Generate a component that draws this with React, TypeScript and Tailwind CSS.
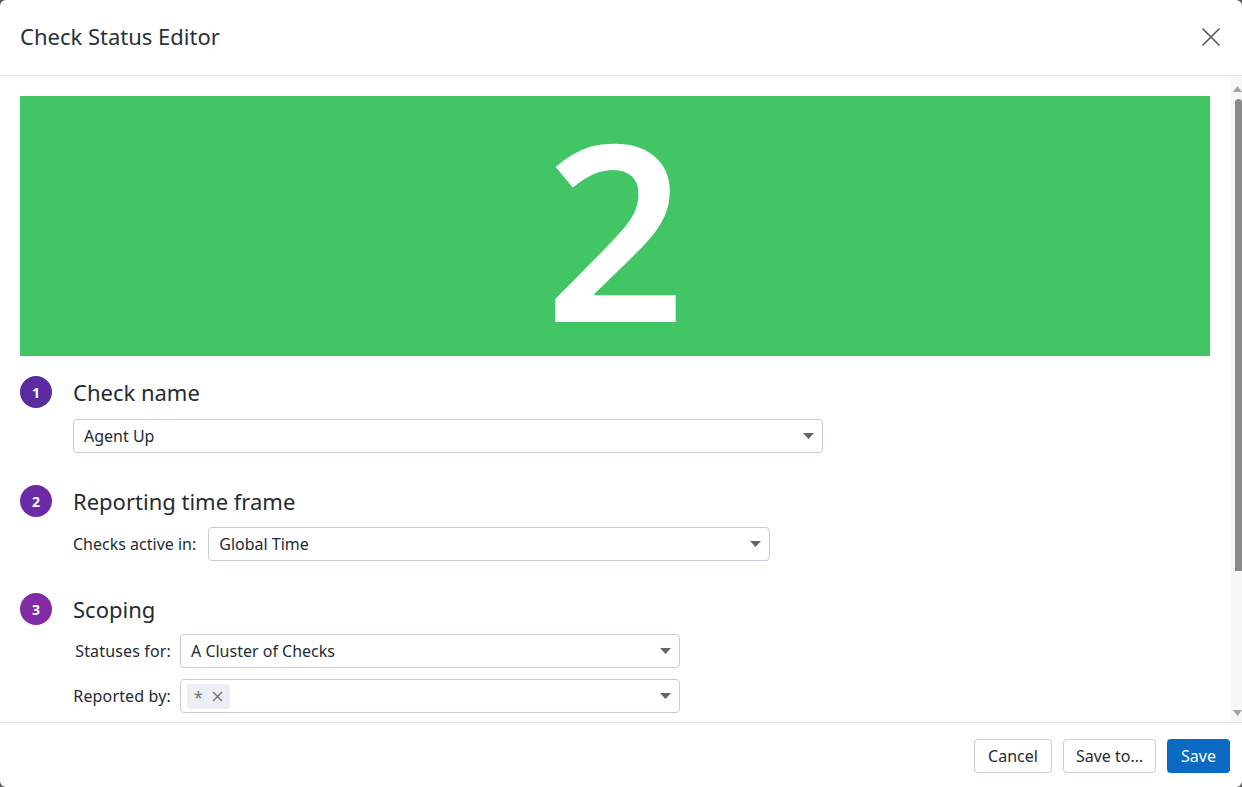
import React from "react";

const font = { fontFamily: '"Noto Sans", "Open Sans", sans-serif' };

function Caret() {
  return (
    <svg width="11" height="6" viewBox="0 0 11 6" className="shrink-0">
      <path d="M0 0 H11 L5.5 6 Z" fill="#5f6670" />
    </svg>
  );
}

function Select({ children, width }: { children: React.ReactNode; width: string }) {
  return (
    <div
      className={`${width} h-[34px] flex items-center justify-between border border-[#c7ccd9] rounded-[4px] bg-white pl-[10px] pr-[8px] text-[16px] text-[#262b33]`}
    >
      <div className="flex items-center">{children}</div>
      <Caret />
    </div>
  );
}

function Step({ n, color, title }: { n: number; color: string; title: string }) {
  return (
    <div className="flex items-center h-[32px]">
      <div
        className={`w-[32px] h-[32px] rounded-full ${color} flex items-center justify-center text-white text-[14px] font-bold`}
      >
        {n}
      </div>
      <div className="ml-[21px] text-[22px] text-[#262b33] leading-none">{title}</div>
    </div>
  );
}

export default function App() {
  return (
    <div className="w-[1242px] h-[787px] bg-[#5a5a5a]" style={font}>
      <div className="w-full h-full bg-white rounded-[6px] flex flex-col overflow-hidden">
        {/* Header */}
        <div className="h-[76px] shrink-0 border-b border-[#e1e1ea] flex items-center justify-between pl-[20px] pr-[20px] pb-[2px]">
          <div className="text-[22px] text-[#28313b]">Check Status Editor</div>
          <svg width="20" height="20" viewBox="0 0 20 20" className="mr-[1px]">
            <path d="M2 2 L18 18 M18 2 L2 18" stroke="#4c5561" strokeWidth="1.6" strokeLinecap="round" />
          </svg>
        </div>

        {/* Body */}
        <div className="flex-1 flex overflow-hidden min-h-0">
          <div className="flex-1 overflow-hidden pl-[20px] pr-[21px] pt-[20px]">
            <div className="h-[260px] bg-[#42c565] flex items-center justify-center">
              <span className="text-white text-[246px] leading-[240px] font-semibold pt-[2px]">2</span>
            </div>

            {/* Section 1 */}
            <div className="mt-[20px]">
              <Step n={1} color="bg-[#5b2ca0]" title="Check name" />
              <div className="mt-[11px] ml-[53px]">
                <Select width="w-[750px]">Agent Up</Select>
              </div>
            </div>

            {/* Section 2 */}
            <div className="mt-[32px]">
              <Step n={2} color="bg-[#6d2aa6]" title="Reporting time frame" />
              <div className="mt-[10px] ml-[53px] flex items-center">
                <div className="text-[16px] text-[#262b33] mr-[12px]">Checks active in:</div>
                <Select width="w-[562px]">Global Time</Select>
              </div>
            </div>

            {/* Section 3 */}
            <div className="mt-[32px]">
              <Step n={3} color="bg-[#8229a6]" title="Scoping" />
              <div className="mt-[9px] ml-[53px] flex flex-col gap-[11px]">
                <div className="flex items-center">
                  <div className="w-[98px] text-right text-[16px] text-[#262b33] mr-[9px] tracking-[0.15px]">Statuses for:</div>
                  <Select width="w-[500px]">A Cluster of Checks</Select>
                </div>
                <div className="flex items-center">
                  <div className="w-[98px] text-right text-[16px] text-[#262b33] mr-[9px] tracking-[0.15px]">Reported by:</div>
                  <div className="w-[500px] h-[34px] flex items-center justify-between border border-[#c7ccd9] rounded-[4px] bg-white pl-[6px] pr-[8px]">
                    <div className="h-[25px] px-[7px] rounded-[4px] bg-[#eceef3] flex items-center gap-[9px] text-[16px] text-[#6a707a]">
                      <span className="mt-[2px]">*</span>
                      <svg width="11" height="11" viewBox="0 0 11 11">
                        <path d="M1 1 L10 10 M10 1 L1 10" stroke="#6a707a" strokeWidth="1.3" />
                      </svg>
                    </div>
                    <Caret />
                  </div>
                </div>
              </div>
            </div>
          </div>

          {/* Scrollbar */}
          <div className="w-[11px] shrink-0 bg-[#f7f7f7] flex flex-col items-end pt-[10px] pb-[6px]">
            <svg width="9" height="6" viewBox="0 0 9 6">
              <path d="M0 6 L4.5 0 L9 6 Z" fill="#a3a3a3" />
            </svg>
            <div className="mt-[7px] w-[7px] h-[472px] bg-[#8a8a8a] rounded-t-[4px]" />
            <div className="flex-1" />
            <svg width="9" height="6" viewBox="0 0 9 6">
              <path d="M0 0 L9 0 L4.5 6 Z" fill="#a3a3a3" />
            </svg>
          </div>
        </div>

        {/* Footer */}
        <div className="h-[65px] shrink-0 border-t border-[#e1e1ea] flex items-center justify-end gap-[11px] pr-[12px] pt-[2px]">
          <button className="h-[34px] px-[13px] border border-[#c7ccd9] rounded-[4px] bg-white text-[16px] text-[#262b33]">
            Cancel
          </button>
          <button className="h-[34px] px-[12px] border border-[#c7ccd9] rounded-[4px] bg-white text-[16px] text-[#262b33]">
            Save to…
          </button>
          <button className="h-[34px] px-[14px] rounded-[4px] bg-[#0b6ac4] text-[16px] text-white">
            Save
          </button>
        </div>
      </div>
    </div>
  );
}
